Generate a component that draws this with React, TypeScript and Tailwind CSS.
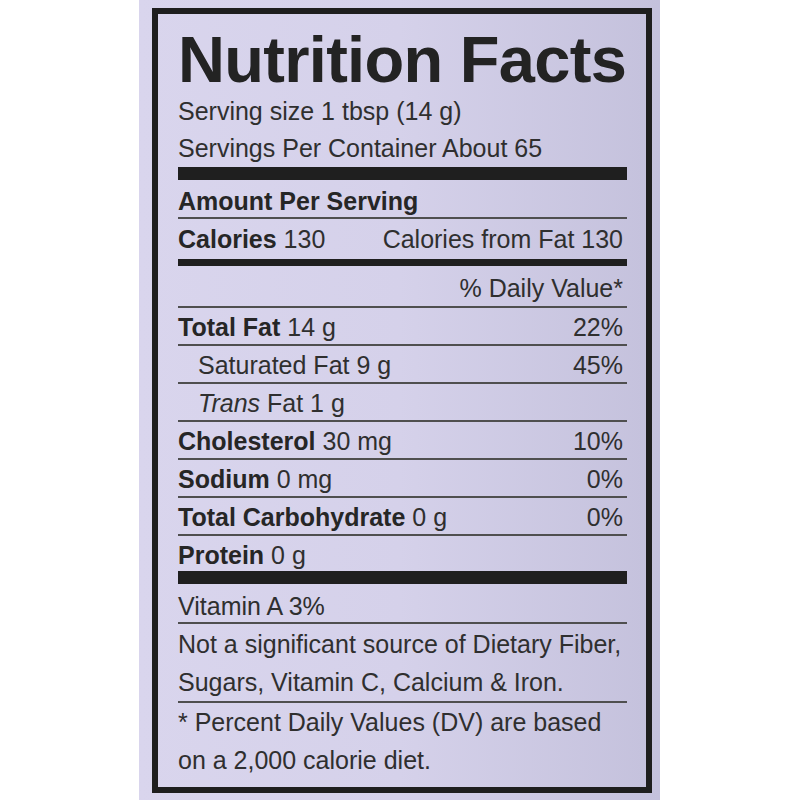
import React from 'react';

// --- Rules between the label sections ---
const ThickBar = () => <div className="h-[13px] bg-[#1f1f1f]" />;
const MidBar = () => <div className="h-[7px] bg-[#1f1f1f]" />;
const Thin = () => <div className="h-[2px] bg-[#4f4f4f]" />;

type Nutrient = {
  name: string;
  amount: string;
  dv?: string;
  bold?: boolean;
  indent?: boolean;
  italic?: string;
};

const nutrients: Nutrient[] = [
  { name: 'Total Fat', amount: '14 g', dv: '22%', bold: true },
  { name: 'Saturated Fat', amount: '9 g', dv: '45%', indent: true },
  { name: 'Fat', amount: '1 g', indent: true, italic: 'Trans' },
  { name: 'Cholesterol', amount: '30 mg', dv: '10%', bold: true },
  { name: 'Sodium', amount: '0 mg', dv: '0%', bold: true },
  { name: 'Total Carbohydrate', amount: '0 g', dv: '0%', bold: true },
];

const NutrientRow = ({ n }: { n: Nutrient }) => (
  <div className="flex justify-between h-[36px] pt-[3px] leading-[33px] pr-[4px]">
    <span className={n.indent ? 'pl-[20px]' : ''}>
      {n.italic && <i>{n.italic} </i>}
      <span className={n.bold ? 'font-bold text-[#262626]' : ''}>{n.name}</span> {n.amount}
    </span>
    <span>{n.dv}</span>
  </div>
);

export default function App() {
  return (
    <div className="w-[800px] h-[800px] bg-white font-['Liberation_Sans',Arial,sans-serif] text-[#2f2f2f] overflow-hidden">
      <div className="ml-[139px] w-[521px] h-full pl-[13px] pr-[8px] pt-[8px] bg-linear-to-r from-[#d9d5ed] via-[#d5d1ea] to-[#c4c1dc]">
        <div className="w-[500px] h-[785px] border-[6px] border-[#1e1e1e] pl-[20px] pr-[19px] pt-[12px] text-[25px]">
          {/* Header */}
          <h1 className="text-[65px] font-bold leading-[67px] tracking-[-0.7px] text-[#232323]">Nutrition Facts</h1>
          <div className="leading-[37px]">Serving size 1 tbsp (14 g)</div>
          <div className="leading-[37px]">Servings Per Container About 65</div>
          <ThickBar />

          {/* Calories */}
          <div className="h-[37px] pt-[6px] leading-[31px] font-bold text-[#262626]">Amount Per Serving</div>
          <Thin />
          <div className="flex justify-between h-[40px] leading-[40px] pr-[4px]">
            <span>
              <span className="font-bold text-[#262626]">Calories</span> 130
            </span>
            <span>Calories from Fat 130</span>
          </div>
          <MidBar />
          <div className="h-[40px] pt-[5px] leading-[35px] text-right pr-[4px]">% Daily Value*</div>
          <Thin />

          {/* Nutrients */}
          {nutrients.map((n) => (
            <React.Fragment key={n.name}>
              <NutrientRow n={n} />
              <Thin />
            </React.Fragment>
          ))}
          <div className="h-[35px] pt-[3px] leading-[32px]">
            <span className="font-bold text-[#262626]">Protein</span> 0 g
          </div>
          <ThickBar />

          {/* Vitamins & footnote */}
          <div className="h-[38px] pt-[7px] leading-[31px]">Vitamin A 3%</div>
          <Thin />
          <div className="pt-[1px] leading-[38px]">
            Not a significant source of Dietary Fiber,
            <br />
            Sugars, Vitamin C, Calcium &amp; Iron.
          </div>
          <Thin />
          <div className="leading-[38px]">
            * Percent Daily Values (DV) are based
            <br />
            on a 2,000 calorie diet.
          </div>
        </div>
      </div>
    </div>
  );
}
